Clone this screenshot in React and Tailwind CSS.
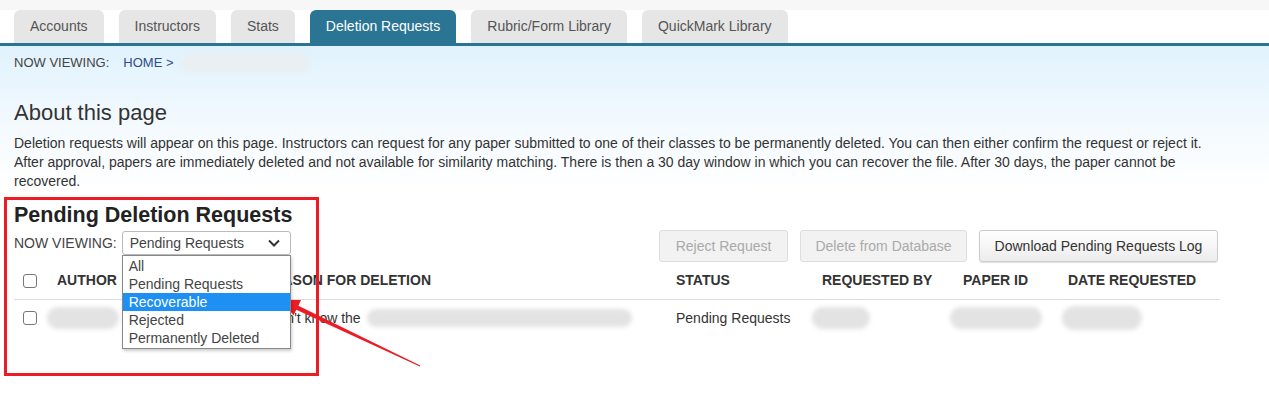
import React from 'react';

const tabs = ['Accounts', 'Instructors', 'Stats', 'Deletion Requests', 'Rubric/Form Library', 'QuickMark Library'];
const options = ['All', 'Pending Requests', 'Recoverable', 'Rejected', 'Permanently Deleted'];

const Blur = ({ className }) => (
  <div className={`bg-[#e3e3e3] rounded-full blur-[2px] ${className}`} />
);

const Checkbox = () => (
  <span className="block w-[14px] h-[14px] border border-[#777] rounded-[3px] bg-white" />
);

const App = () => {
  return (
    <div className="relative w-[1269px] h-[412px] overflow-hidden bg-white text-[#333] font-['Liberation_Sans',Arial,sans-serif]">
      <div className="h-[10px] bg-[#f7f7f7]" />

      {/* Tabs */}
      <nav className="flex gap-[15px] pl-[14px] h-[33px]">
        {tabs.map((tab) => (
          <div
            key={tab}
            className={`px-4 flex items-center rounded-t-[6px] text-[14px] ${
              tab === 'Deletion Requests' ? 'bg-[#2a7494] text-white' : 'bg-[#e6e6e6] text-[#555]'
            }`}
          >
            {tab}
          </div>
        ))}
      </nav>
      <div className="h-[3px] bg-[#2a7494]" />

      <div className="bg-linear-to-b from-[#e0f2fd] via-[#f2f9fe] to-white px-[14px] pt-[9px]">
        {/* Breadcrumb */}
        <div className="flex items-center h-[16px] text-[13px]">
          <span className="text-[#444]">NOW VIEWING:</span>
          <span className="ml-[14px] text-[#2f4c8c]">HOME &gt;</span>
          <Blur className="ml-[6px] w-[130px] h-[20px] bg-[#e9eff3]" />
        </div>

        {/* About */}
        <h1 className="mt-[30px] text-[22px] leading-[24px] text-[#333]">About this page</h1>
        <p className="mt-[9px] text-[14px] leading-[19px] text-[#333]">
          Deletion requests will appear on this page. Instructors can request for any paper submitted to one of their classes to be permanently deleted. You can then either confirm the request or reject it.
          <br />
          After approval, papers are immediately deleted and not available for similarity matching. There is then a 30 day window in which you can recover the file. After 30 days, the paper cannot be
          <br />
          recovered.
        </p>
      </div>

      <div className="px-[14px]">
        <h2 className="mt-[12px] text-[21.5px] leading-[24px] font-bold text-[#222]">Pending Deletion Requests</h2>

        {/* Controls */}
        <div className="mt-[3px] flex items-start pr-[37px]">
          <div className="flex items-center mt-[1px] h-[24px]">
            <span className="text-[14px] text-[#444]">NOW VIEWING:</span>
            <div className="relative ml-[5px]">
              <div className="w-[169px] h-[24px] border border-[#bbb] rounded-[3px] bg-white flex items-center justify-between pl-[7px] pr-[10px] text-[14px] text-[#444]">
                <span>Pending Requests</span>
                <svg width="12" height="8" viewBox="0 0 12 8" fill="none" stroke="#333" strokeWidth="2">
                  <path d="M1 1.5l5 5 5-5" />
                </svg>
              </div>
              <ul className="absolute z-10 left-0 top-[24px] w-[169px] border border-[#888] bg-white shadow-[1px_2px_3px_rgba(0,0,0,0.2)] text-[14px] leading-[18px] py-[1px]">
                {options.map((opt) => (
                  <li
                    key={opt}
                    className={`pl-[6px] ${opt === 'Recoverable' ? 'bg-[#1e8ff3] text-white' : 'text-[#444]'}`}
                  >
                    {opt}
                  </li>
                ))}
              </ul>
            </div>
          </div>

          <div className="ml-auto flex gap-[12px] text-[14px]">
            <button className="h-[32px] w-[129px] border border-[#ddd] rounded-[3px] bg-[#f2f2f2] text-[#aaa]">
              Reject Request
            </button>
            <button className="h-[32px] w-[167px] border border-[#ddd] rounded-[3px] bg-[#f2f2f2] text-[#aaa]">
              Delete from Database
            </button>
            <button className="h-[32px] w-[239px] border border-[#ccc] rounded-[3px] bg-linear-to-b from-white to-[#ececec] text-[#333] shadow-[0_1px_1px_rgba(0,0,0,0.12)]">
              Download Pending Requests Log
            </button>
          </div>
        </div>

        {/* Table */}
        <div className="w-[1206px]">
          <div className="grid grid-cols-[43px_206px_413px_146px_141px_105px_1fr] items-center h-[38px] border-b border-[#ddd] text-[14px] font-bold text-[#333]">
            <div className="pl-[9px]"><Checkbox /></div>
            <div>AUTHOR</div>
            <div>REASON FOR DELETION</div>
            <div>STATUS</div>
            <div>REQUESTED BY</div>
            <div>PAPER ID</div>
            <div>DATE REQUESTED</div>
          </div>
          <div className="grid grid-cols-[43px_206px_413px_146px_141px_105px_1fr] items-center h-[36px] text-[14px] text-[#333]">
            <div className="pl-[9px]"><Checkbox /></div>
            <div className="-ml-[10px]"><Blur className="w-[72px] h-[22px]" /></div>
            <div className="flex items-center">
              <span>I don't know the</span>
              <Blur className="ml-[6px] w-[265px] h-[18px]" />
            </div>
            <div>Pending Requests</div>
            <div className="-ml-[10px]"><Blur className="w-[58px] h-[22px]" /></div>
            <div className="-ml-[13px]"><Blur className="w-[92px] h-[22px]" /></div>
            <div className="-ml-[6px]"><Blur className="w-[80px] h-[24px]" /></div>
          </div>
        </div>
      </div>

      {/* Annotation: red box and arrow */}
      <div className="absolute left-[4px] top-[197px] w-[315px] h-[179px] border-[3px] border-[#ec1c24] pointer-events-none" />
      <svg className="absolute left-0 top-0 pointer-events-none" width="1269" height="412">
        <polygon
          fill="#ec1c24"
          points="281,300 301,300 298.4,305.8 420.2,365.6 419.8,366.4 296.3,309.7 293.6,315.2"
        />
      </svg>
    </div>
  );
};

export default App;
